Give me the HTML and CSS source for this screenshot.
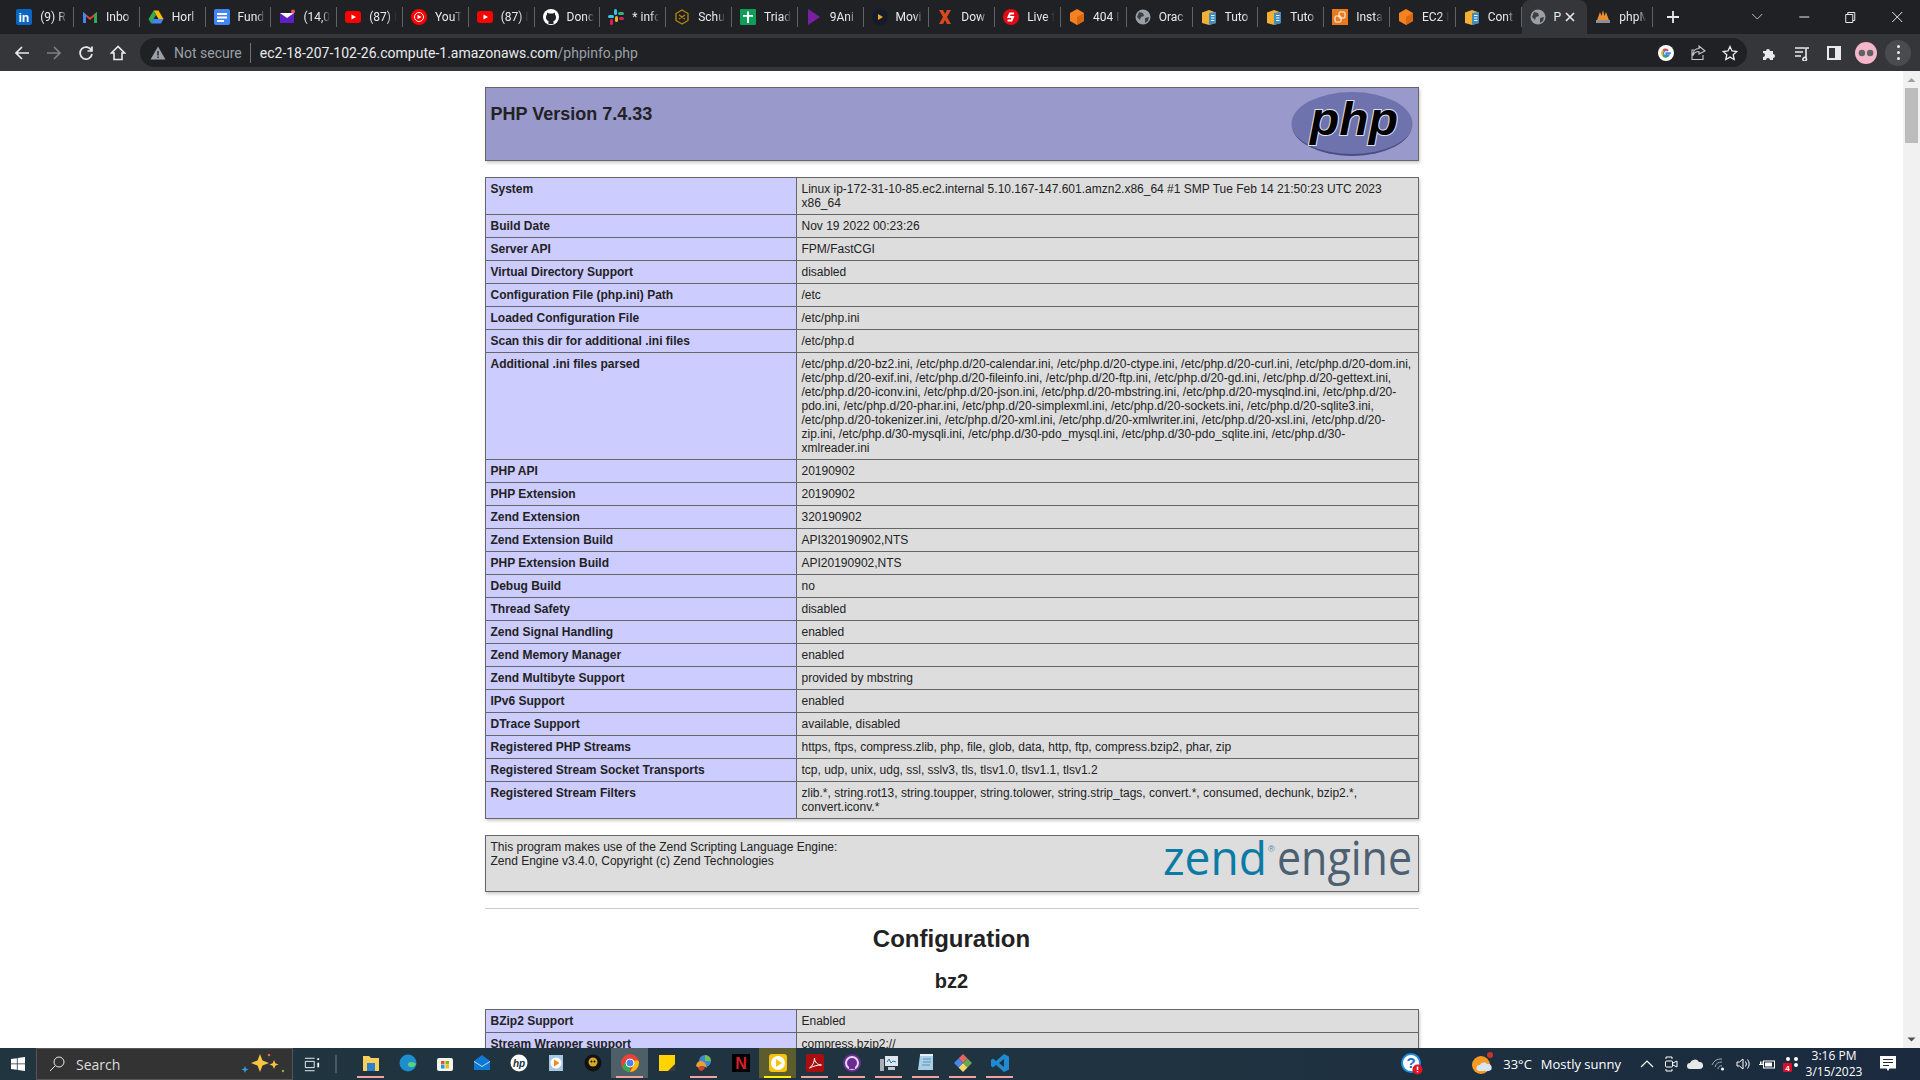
FILE: index.html
```html
<!DOCTYPE html>
<html lang="en">
<head>
    <meta charset="UTF-8">
    <meta name="viewport" content="width=device-width, initial-scale=1.0">
    <title>PHP 7.4.33 - phpinfo()</title>
    <link rel="stylesheet" href="styles.css">
</head>
<body>
    <div class="tabstrip">
        <div class="tab"><svg class="fav" viewBox="0 0 16 16"><rect width="16" height="16" rx="2" fill="#0a66c2"/><text x="2.5" y="13" class="fav-text">in</text></svg><span class="tab-title">(9) R</span></div>
        <div class="tab"><svg class="fav" viewBox="0 0 16 16"><path d="M1 14V3l7 5.5L15 3v11h-3V7.5L8 11 4 7.5V14z" fill="#ea4335"/><path d="M1 14V3l3 2.5V14z" fill="#4285f4"/><path d="M15 14V3l-3 2.5V14z" fill="#34a853"/></svg><span class="tab-title">Inbo</span></div>
        <div class="tab"><svg class="fav" viewBox="0 0 16 16"><path d="M5.5 1.5h5L15.5 10h-5z" fill="#fbbc04"/><path d="M5.5 1.5L.5 10 3 14.5 8 6z" fill="#34a853"/><path d="M3 14.5h10l2.5-4.500h-10z" fill="#4285f4"/></svg><span class="tab-title">Horl</span></div>
        <div class="tab"><svg class="fav" viewBox="0 0 16 16"><rect width="16" height="16" rx="2" fill="#4285f4"/><path d="M3 4h10v2H3zM3 7.5h10v2H3zM3 11h7v2H3z" fill="#fff"/></svg><span class="tab-title">Fund</span></div>
        <div class="tab"><svg class="fav" viewBox="0 0 16 16"><path d="M1 4h14v10H1z" fill="#5f1fc4"/><path d="M1 4h14L8 9z" fill="#fff"/><circle cx="14" cy="2.5" r="2" fill="#f0506e"/></svg><span class="tab-title">(14,0</span></div>
        <div class="tab"><svg class="fav" viewBox="0 0 16 16"><rect y="2" width="16" height="12" rx="3" fill="#f00"/><path d="M6.5 5.5L11 8l-4.500 2.500z" fill="#fff"/></svg><span class="tab-title">(87) I</span></div>
        <div class="tab"><svg class="fav" viewBox="0 0 16 16"><circle cx="8" cy="8" r="8" fill="#f00"/><circle cx="8" cy="8" r="4.500" fill="none" stroke="#fff"/><path d="M6.5 5.8L10.5 8l-4 2.200z" fill="#fff"/></svg><span class="tab-title">YouT</span></div>
        <div class="tab"><svg class="fav" viewBox="0 0 16 16"><rect y="2" width="16" height="12" rx="3" fill="#f00"/><path d="M6.5 5.5L11 8l-4.500 2.500z" fill="#fff"/></svg><span class="tab-title">(87) I</span></div>
        <div class="tab"><svg class="fav" viewBox="0 0 16 16"><circle cx="8" cy="8" r="8" fill="#fff"/><path d="M5.5 15v-3c-2-.5-2.500-2-2.500-4 0-1 .5-2 1-2.500V3.500l2 1h4l2-1v2c.5.500 1 1.500 1 2.500 0 2-.5 3.500-2.500 4v3z" fill="#202124"/></svg><span class="tab-title">Donc</span></div>
        <div class="tab"><svg class="fav" viewBox="0 0 16 16"><rect x="6" y="0" width="3" height="6" rx="1.500" fill="#36c5f0"/><rect x="0" y="6" width="6" height="3" rx="1.500" fill="#36c5f0"/><rect x="10" y="3" width="6" height="3" rx="1.500" fill="#2eb67d"/><rect x="7" y="7" width="3" height="6" rx="1.500" fill="#ecb22e"/><rect x="11" y="8" width="5" height="3" rx="1.500" fill="#e01e5a"/><rect x="2" y="10" width="3" height="6" rx="1.500" fill="#e01e5a"/></svg><span class="tab-title">* info</span></div>
        <div class="tab"><svg class="fav" viewBox="0 0 16 16"><path d="M8 1l6 3.500v7L8 15l-6-3.500v-7zM5 6l6 4M11 6L5 10" fill="none" stroke="#b8860b" stroke-width="1.300"/></svg><span class="tab-title">Schu</span></div>
        <div class="tab"><svg class="fav" viewBox="0 0 16 16"><rect width="16" height="16" rx="1" fill="#0f9d58"/><path d="M7 2.5h2V6h4v1.800H9V14H7V7.800H3V6h4z" fill="#fff"/></svg><span class="tab-title">Triad</span></div>
        <div class="tab"><svg class="fav" viewBox="0 0 16 16"><path d="M2 0l12 8-12 8z" fill="#7b1fa2"/></svg><span class="tab-title">9Ani</span></div>
        <div class="tab"><svg class="fav" viewBox="0 0 16 16"><circle cx="8" cy="8" r="8" fill="#141c2b"/><path d="M6 5l5 3-5 3z" fill="#f5a623"/></svg><span class="tab-title">Movi</span></div>
        <div class="tab"><svg class="fav" viewBox="0 0 16 16"><path d="M2 1h4l2 4 2-4h4l-4 7 4 7h-4l-2-4-2 4H2l4-7z" fill="#d9481c"/></svg><span class="tab-title">Dow</span></div>
        <div class="tab"><svg class="fav" viewBox="0 0 16 16"><circle cx="8" cy="8" r="8" fill="#e50914"/><path d="M11 4.500H7L5.500 8H10l-1.500 3.500H4.500" fill="none" stroke="#fff" stroke-width="2"/></svg><span class="tab-title">Live f</span></div>
        <div class="tab"><svg class="fav" viewBox="0 0 16 16"><path d="M8 0l7 4v8l-7 4-7-4V4z" fill="#f58220"/><path d="M8 8l7-4v8l-7 4z" fill="#d9680f"/></svg><span class="tab-title">404 I</span></div>
        <div class="tab"><svg class="fav" viewBox="0 0 16 16"><circle cx="8" cy="8" r="7.500" fill="#9aa0a6"/><path d="M4 3l4 1 1 3-3 1-1 3-3-3zM10 9l4-1-1 4-3 2z" fill="#3c4043"/></svg><span class="tab-title">Orac</span></div>
        <div class="tab"><svg class="fav" viewBox="0 0 16 16"><path d="M8 1l7 2.500V14l-7 2-7-2V3.500z" fill="#f2b035"/><path d="M8 4l7-1V14l-7 2z" fill="#3f8dbf"/><path d="M10 6.500h3.500M10 9h3.500M10 11.500h3.500" stroke="#fff"/></svg><span class="tab-title">Tuto</span></div>
        <div class="tab"><svg class="fav" viewBox="0 0 16 16"><path d="M8 1l7 2.500V14l-7 2-7-2V3.500z" fill="#f2b035"/><path d="M8 4l7-1V14l-7 2z" fill="#3f8dbf"/><path d="M10 6.500h3.500M10 9h3.500M10 11.500h3.500" stroke="#fff"/></svg><span class="tab-title">Tuto</span></div>
        <div class="tab"><svg class="fav" viewBox="0 0 16 16"><rect width="16" height="16" fill="#e8791d"/><rect x="7" y="3" width="6" height="6" rx="1" fill="none" stroke="#fff"/><rect x="3" y="7" width="6" height="6" rx="1" fill="none" stroke="#fff"/></svg><span class="tab-title">Insta</span></div>
        <div class="tab"><svg class="fav" viewBox="0 0 16 16"><path d="M8 0l7 4v8l-7 4-7-4V4z" fill="#f58220"/><path d="M8 8l7-4v8l-7 4z" fill="#d9680f"/></svg><span class="tab-title">EC2 I</span></div>
        <div class="tab"><svg class="fav" viewBox="0 0 16 16"><path d="M8 1l7 2.500V14l-7 2-7-2V3.500z" fill="#f2b035"/><path d="M8 4l7-1V14l-7 2z" fill="#3f8dbf"/><path d="M10 6.500h3.500M10 9h3.500M10 11.500h3.500" stroke="#fff"/></svg><span class="tab-title">Cont</span></div>
        <div class="tab active"><svg class="fav" viewBox="0 0 16 16"><circle cx="8" cy="8" r="7.500" fill="#9aa0a6"/><path d="M4 3l4 1 1 3-3 1-1 3-3-3zM10 9l4-1-1 4-3 2z" fill="#3c4043"/></svg><span class="tab-title">P</span><svg class="tab-close" viewBox="0 0 10 10"><path d="M1 1l8 8M9 1L1 9" stroke="#e8eaed" stroke-width="1.600"/></svg></div>
        <div class="tab"><svg class="fav" viewBox="0 0 16 16"><path d="M1 14L5 3l1.500 4L8 1l1.500 6L11 3l4 11z" fill="#e8912d"/><rect x="1" y="11" width="14" height="3" fill="#8a8f98"/></svg><span class="tab-title">phpM</span></div>
        <svg class="newtab" viewBox="0 0 12 12"><path d="M6 0v12M0 6h12" stroke="#e8eaed" stroke-width="1.800"/></svg>
        <div class="window-btns">
            <svg class="win-btn" viewBox="0 0 46 34"><path d="M18 14l5 5 5-5" fill="none" stroke="#bdc1c6"/></svg>
            <svg class="win-btn" viewBox="0 0 46 34"><path d="M18 17h10" stroke="#e8eaed"/></svg>
            <svg class="win-btn" viewBox="0 0 46 34"><path d="M18.500 14.500h7v8h-7zM20.500 14.500v-2h7v8h-2" fill="none" stroke="#e8eaed"/></svg>
            <svg class="win-btn" viewBox="0 0 46 34"><path d="M18 12l10 10M28 12L18 22" stroke="#e8eaed"/></svg>
        </div>
    </div>

    <div class="toolbar">
        <svg class="tool" viewBox="0 0 16 16"><path d="M15 8H2M8 2L2 8l6 6" fill="none" stroke="#e8eaed" stroke-width="1.700"/></svg>
        <svg class="tool" viewBox="0 0 16 16"><path d="M1 8h13M8 2l6 6-6 6" fill="none" stroke="#7d8084" stroke-width="1.700"/></svg>
        <svg class="tool" viewBox="0 0 16 16"><path d="M13.500 5.500A6 6 0 1 0 14 9M14 1.500v4.500H9.500" fill="none" stroke="#e8eaed" stroke-width="1.700"/></svg>
        <svg class="tool" viewBox="0 0 16 16"><path d="M8 1.500L1.500 8H4v6.500h8V8h2.500z" fill="none" stroke="#e8eaed" stroke-width="1.600"/></svg>
        <div class="omnibox">
            <svg class="warn" viewBox="0 0 16 16"><path d="M8 1.500L15.500 14.500H.5z" fill="#9aa0a6"/><path d="M7.300 6h1.400v4.500H7.300zM7.300 11.500h1.400V13H7.300z" fill="#202124"/></svg>
            <span class="not-secure">Not secure</span>
            <span class="url"><b>ec2-18-207-102-26.compute-1.amazonaws.com</b>/phpinfo.php</span>
            <div class="omni-icons">
                <svg class="tool" viewBox="0 0 16 16"><circle cx="8" cy="8" r="8" fill="#fff"/><path d="M12.800 8.200H8.200v1.800h2.600A3 3 0 1 1 10 5.800" fill="none" stroke="#4285f4" stroke-width="1.700"/><path d="M5 5.500A3.200 3.200 0 0 1 10 5.800" fill="none" stroke="#ea4335" stroke-width="1.700"/><path d="M5 10.500A3.200 3.200 0 0 1 5 5.500" fill="none" stroke="#fbbc04" stroke-width="1.700"/><path d="M5 10.500a3.200 3.200 0 0 0 5 .3" fill="none" stroke="#34a853" stroke-width="1.700"/></svg>
                <svg class="tool" viewBox="0 0 16 16"><path d="M9 9V6.500C5.500 6.500 4 8 3 10.500 3 6.500 5 3.500 9 3.500V1l6 5zM13 10v4.500H2V5h2.500" fill="none" stroke="#c4c7c5" stroke-width="1.100"/></svg>
                <svg class="tool" viewBox="0 0 16 16"><path d="M8 1.500l2 4.500 4.800.5-3.600 3.200 1 4.800L8 12.100 3.800 14.500l1-4.800L1.200 6.500 6 6z" fill="none" stroke="#e8eaed" stroke-width="1.300"/></svg>
            </div>
        </div>
        <div class="ext-icons">
            <svg class="tool" viewBox="0 0 16 16"><path d="M1 6h3a2 2 0 1 1 4 0h3v3a2 2 0 1 1 0 4v2H8a2 2 0 1 0-4 0H1v-3a2 2 0 1 0 0-4z" fill="#e8eaed"/></svg>
            <svg class="tool" viewBox="0 0 16 16"><path d="M1 3h10M1 7h8M1 11h6" stroke="#e8eaed" stroke-width="1.400"/><path d="M12 13V3h3M12 13a1.800 1.800 0 1 1-.1-.1" fill="none" stroke="#e8eaed" stroke-width="1.600"/></svg>
            <svg class="tool" viewBox="0 0 16 16"><path d="M2 2h12v12H2z" fill="none" stroke="#e8eaed" stroke-width="2"/><path d="M9 2h5v12H9z" fill="#e8eaed"/></svg>
            <svg class="tool avatar" viewBox="0 0 24 24"><circle cx="12" cy="12" r="12" fill="#f4b6c8"/><circle cx="7.500" cy="12" r="3.500" fill="#5f6368"/><circle cx="16.500" cy="12" r="3.500" fill="#5f6368"/></svg>
            <span class="menu-btn"><i></i><i></i><i></i></span>
        </div>
    </div>

    <div class="viewport">
        <div class="page">
            <div class="center">
                <table class="info-table">
                    <tr class="h"><td>
                        <svg class="php-logo" viewBox="0 0 122 64">
                            <ellipse cx="61" cy="32" rx="60.500" ry="32" fill="#6e72ad"/>
                            <path d="M.5 32a60.500 32 0 0 0 121 0 60.500 30 0 0 1-121 0z" fill="#4a4d84"/>
                            <text x="19" y="43" textLength="88" lengthAdjust="spacingAndGlyphs" class="php-word">php</text>
                        </svg>
                        <h1 class="version">PHP Version 7.4.33</h1>
                    </td></tr>
                </table>
                <table class="info-table">
                    <tr><td class="e">System</td><td class="v">Linux ip-172-31-10-85.ec2.internal 5.10.167-147.601.amzn2.x86_64 #1 SMP Tue Feb 14 21:50:23 UTC 2023 x86_64</td></tr>
                    <tr><td class="e">Build Date</td><td class="v">Nov 19 2022 00:23:26</td></tr>
                    <tr><td class="e">Server API</td><td class="v">FPM/FastCGI</td></tr>
                    <tr><td class="e">Virtual Directory Support</td><td class="v">disabled</td></tr>
                    <tr><td class="e">Configuration File (php.ini) Path</td><td class="v">/etc</td></tr>
                    <tr><td class="e">Loaded Configuration File</td><td class="v">/etc/php.ini</td></tr>
                    <tr><td class="e">Scan this dir for additional .ini files</td><td class="v">/etc/php.d</td></tr>
                    <tr><td class="e">Additional .ini files parsed</td><td class="v">/etc/php.d/20-bz2.ini, /etc/php.d/20-calendar.ini, /etc/php.d/20-ctype.ini, /etc/php.d/20-curl.ini, /etc/php.d/20-dom.ini, /etc/php.d/20-exif.ini, /etc/php.d/20-fileinfo.ini, /etc/php.d/20-ftp.ini, /etc/php.d/20-gd.ini, /etc/php.d/20-gettext.ini, /etc/php.d/20-iconv.ini, /etc/php.d/20-json.ini, /etc/php.d/20-mbstring.ini, /etc/php.d/20-mysqlnd.ini, /etc/php.d/20-pdo.ini, /etc/php.d/20-phar.ini, /etc/php.d/20-simplexml.ini, /etc/php.d/20-sockets.ini, /etc/php.d/20-sqlite3.ini, /etc/php.d/20-tokenizer.ini, /etc/php.d/20-xml.ini, /etc/php.d/20-xmlwriter.ini, /etc/php.d/20-xsl.ini, /etc/php.d/20-zip.ini, /etc/php.d/30-mysqli.ini, /etc/php.d/30-pdo_mysql.ini, /etc/php.d/30-pdo_sqlite.ini, /etc/php.d/30-xmlreader.ini</td></tr>
                    <tr><td class="e">PHP API</td><td class="v">20190902</td></tr>
                    <tr><td class="e">PHP Extension</td><td class="v">20190902</td></tr>
                    <tr><td class="e">Zend Extension</td><td class="v">320190902</td></tr>
                    <tr><td class="e">Zend Extension Build</td><td class="v">API320190902,NTS</td></tr>
                    <tr><td class="e">PHP Extension Build</td><td class="v">API20190902,NTS</td></tr>
                    <tr><td class="e">Debug Build</td><td class="v">no</td></tr>
                    <tr><td class="e">Thread Safety</td><td class="v">disabled</td></tr>
                    <tr><td class="e">Zend Signal Handling</td><td class="v">enabled</td></tr>
                    <tr><td class="e">Zend Memory Manager</td><td class="v">enabled</td></tr>
                    <tr><td class="e">Zend Multibyte Support</td><td class="v">provided by mbstring</td></tr>
                    <tr><td class="e">IPv6 Support</td><td class="v">enabled</td></tr>
                    <tr><td class="e">DTrace Support</td><td class="v">available, disabled</td></tr>
                    <tr><td class="e">Registered PHP Streams</td><td class="v">https, ftps, compress.zlib, php, file, glob, data, http, ftp, compress.bzip2, phar, zip</td></tr>
                    <tr><td class="e">Registered Stream Socket Transports</td><td class="v">tcp, udp, unix, udg, ssl, sslv3, tls, tlsv1.0, tlsv1.1, tlsv1.2</td></tr>
                    <tr><td class="e">Registered Stream Filters</td><td class="v">zlib.*, string.rot13, string.toupper, string.tolower, string.strip_tags, convert.*, consumed, dechunk, bzip2.*, convert.iconv.*</td></tr>
                </table>
                <table class="info-table">
                    <tr class="v"><td>
                        <svg class="zend-logo" viewBox="0 0 252 47">
                            <text x="2" y="35" textLength="104" lengthAdjust="spacingAndGlyphs" class="zend-word">zend</text>
                            <text x="107" y="12" class="zend-reg">®</text>
                            <text x="116" y="35" textLength="135" lengthAdjust="spacingAndGlyphs" class="engine-word">engine</text>
                        </svg>
                        This program makes use of the Zend Scripting Language Engine:<br>Zend Engine v3.4.0, Copyright (c) Zend Technologies
                    </td></tr>
                </table>
                <hr class="rule">
                <h1 class="section-title">Configuration</h1>
                <h2 class="module-title">bz2</h2>
                <table class="info-table">
                    <tr><td class="e">BZip2 Support</td><td class="v">Enabled</td></tr>
                    <tr><td class="e">Stream Wrapper support</td><td class="v">compress.bzip2://</td></tr>
                    <tr><td class="e">Stream Filter support</td><td class="v">bzip2.decompress, bzip2.compress</td></tr>
                </table>
            </div>
        </div>
        <div class="scrollbar">
            <svg class="scroll-arrow" viewBox="0 0 17 17"><path d="M4.500 11L8.500 7l4 4z" fill="#a0a0a0"/></svg>
            <div class="scroll-thumb"></div>
            <svg class="scroll-arrow" viewBox="0 0 17 17"><path d="M4.500 6.500L8.500 10.500l4-4z" fill="#505050"/></svg>
        </div>
    </div>

    <div class="taskbar">
        <svg class="start" viewBox="0 0 16 16"><path d="M0 2.300l6.700-1V7.500H0zM7.600 1.200L16 0v7.500H7.600zM0 8.400h6.700v6.300l-6.700-1zM7.600 8.400H16V16l-8.400-1.200z" fill="#fff"/></svg>
        <div class="searchbox">
            <svg class="search-glass" viewBox="0 0 16 16"><circle cx="10" cy="6" r="5" fill="none" stroke="#e8e8e8"/><path d="M6.300 9.700L1 15" stroke="#e8e8e8"/></svg>
            <span>Search</span>
            <svg class="sparkles" viewBox="0 0 44 24"><path d="M19 2l2.500 6.500L28 11l-6.500 2.500L19 20l-2.500-6.500L10 11l6.500-2.500z" fill="#f9c440"/><path d="M33 8l1.300 3.200 3.200 1.300-3.200 1.300L33 17l-1.300-3.200-3.200-1.300 3.200-1.300z" fill="#f9c440"/><path d="M4 14l1 2.500 2.500 1-2.500 1L4 21l-1-2.500-2.500-1 2.500-1z" fill="#2b9fe6"/><circle cx="28" cy="3" r="1.300" fill="#e8663c"/><circle cx="42" cy="19" r="1.200" fill="#7ab648"/></svg>
        </div>
        <svg class="taskview" viewBox="0 0 18 16"><path d="M1.500 4.500h10v7h-10zM1 1h11M1 15h11" fill="none" stroke="#fff"/><path d="M15 1h2v2h-2zM15 6h2v5h-2z" fill="#fff"/></svg>
        <span class="task-sep"></span>
        <div class="apps">
            <div class="app running"><svg class="app-icon" viewBox="0 0 18 18"><path d="M1 2h6l2 2h8v13H1z" fill="#f8cf5c"/><rect x="5" y="9" width="8" height="8" fill="#2a7fd0"/></svg></div>
            <div class="app"><svg class="app-icon" viewBox="0 0 18 18"><circle cx="9" cy="9" r="8.500" fill="#1d8fd1"/><path d="M17 10c-1 3-5 4-7 2.500S9 8 12 8s4 1 5 2z" fill="#5fd36f"/></svg></div>
            <div class="app"><svg class="app-icon" viewBox="0 0 18 18"><rect x="1" y="4" width="16" height="13" rx="2" fill="#f4f4f4"/><rect x="5" y="7" width="3.500" height="3.500" fill="#f25022"/><rect x="9.500" y="7" width="3.500" height="3.500" fill="#7fba00"/><rect x="5" y="11" width="3.500" height="3.500" fill="#00a4ef"/><rect x="9.500" y="11" width="3.500" height="3.500" fill="#ffb900"/></svg></div>
            <div class="app"><svg class="app-icon" viewBox="0 0 18 18"><path d="M1 7l8-6 8 6v9H1z" fill="#0f78d4"/><path d="M1 7l8 5 8-5v1l-8 5-8-5z" fill="#bfe3fb"/></svg></div>
            <div class="app"><svg class="app-icon" viewBox="0 0 18 18"><circle cx="9" cy="9" r="8.500" fill="#fff"/><text x="9" y="13" text-anchor="middle" class="hp-word">hp</text></svg></div>
            <div class="app"><svg class="app-icon" viewBox="0 0 18 18"><rect x="2" y="1" width="14" height="16" fill="#a9c6e4"/><circle cx="9" cy="9" r="5.500" fill="#fff"/><path d="M7 5.500L12.500 9 7 12.500z" fill="#f28b1e"/></svg></div>
            <div class="app"><svg class="app-icon" viewBox="0 0 18 18"><circle cx="9" cy="9" r="8.500" fill="#111"/><circle cx="9" cy="8" r="4.500" fill="#d8a928"/><circle cx="7.500" cy="7.500" r="1" fill="#111"/><circle cx="10.500" cy="7.500" r="1" fill="#111"/></svg></div>
            <div class="app active running"><svg class="app-icon" viewBox="0 0 18 18"><circle cx="9" cy="9" r="9" fill="#ea4335"/><path d="M9 18a9 9 0 0 1-7.800-4.500L5 7l4 6.500z" fill="#34a853"/><path d="M18 9a9 9 0 0 1-9 9l4-7-1-4.500h5.300c.4.800.7 1.600.7 2.500z" fill="#fbbc04"/><circle cx="9" cy="9" r="4" fill="#4285f4" stroke="#fff"/></svg></div>
            <div class="app"><svg class="app-icon" viewBox="0 0 18 18"><rect x="1" y="1" width="16" height="16" fill="#ffd400"/><path d="M10 17l7-7v7z" fill="#3c3c3c"/></svg></div>
            <div class="app running"><svg class="app-icon" viewBox="0 0 18 18"><circle cx="10" cy="7" r="6" fill="#3f86d9"/><path d="M10 1a6 6 0 0 1 6 6h-6z" fill="#6fc14b"/><path d="M1 12c1-6 6-6 9-3l2 5c-3-2-6-3-8 0z" fill="#e8a32c"/><path d="M3 14c2-3 5-2 7 0l-3 3c-2 0-3-1-4-3z" fill="#d2452d"/></svg></div>
            <div class="app"><svg class="app-icon netflix" viewBox="0 0 18 18"><rect width="18" height="18" fill="#000"/><text x="9" y="15" text-anchor="middle" class="netflix-word">N</text></svg></div>
            <div class="app player running"><svg class="app-icon" viewBox="0 0 18 18"><rect width="18" height="18" rx="3" fill="#f4c20d"/><circle cx="9" cy="9" r="7" fill="#fff"/><path d="M7 5l6 4-6 4z" fill="#f4c20d"/></svg></div>
            <div class="app running"><svg class="app-icon" viewBox="0 0 18 18"><rect width="18" height="18" rx="2" fill="#ab0e0e"/><path d="M3.500 14c3-2 5-6 5-10 0 4 3 7 7 7-4 0-8 1-12 3z" fill="none" stroke="#fff"/></svg></div>
            <div class="app running"><svg class="app-icon" viewBox="0 0 18 18"><circle cx="9" cy="9" r="9" fill="#6a2c91"/><circle cx="9" cy="9" r="6" fill="none" stroke="#e8d7f1" stroke-width="2"/><path d="M6 15V10h6v5" fill="#6a2c91"/></svg></div>
            <div class="app running"><svg class="app-icon" viewBox="0 0 18 18"><rect x="5" y="2" width="13" height="10" fill="#dfe6ec"/><path d="M7 8l2-3 2 4 2-2 3 1" fill="none" stroke="#2b79c2"/><rect x="0" y="5" width="4" height="12" fill="#a7aeb5"/><rect x="8" y="13" width="7" height="3" fill="#c4c9ce"/></svg></div>
            <div class="app running"><svg class="app-icon" viewBox="0 0 18 18"><path d="M3 1h13v15H1z" fill="#a9cfe8"/><path d="M6 5h8M6 8h8M5 11h8" stroke="#5c8fb3"/><path d="M3 0h13v2H3z" fill="#e8eef2"/></svg></div>
            <div class="app running"><svg class="app-icon" viewBox="0 0 18 18"><path d="M9 0l4.500 4.500L9 9 4.500 4.500z" fill="#e06666"/><path d="M13.500 4.500L18 9l-4.500 4.500L9 9z" fill="#6aa84f"/><path d="M9 9l4.500 4.500L9 18l-4.500-4.500z" fill="#f1d76b"/><path d="M4.500 4.500L9 9l-4.500 4.500L0 9z" fill="#4a86e8"/></svg></div>
            <div class="app running"><svg class="app-icon" viewBox="0 0 18 18"><path d="M13 0l5 2.500v13L13 18 5 11l-3 2.500L0 12V6l2-1.500L5 7z" fill="#1f8ad2"/><path d="M13 5L8 9l5 4z" fill="#1e3340"/></svg></div>
        </div>
        <div class="tray">
            <svg class="tray-help" viewBox="0 0 22 22"><circle cx="10" cy="10" r="9" fill="#fff" stroke="#1b8fe0" stroke-width="2"/><text x="10" y="15" text-anchor="middle" class="help-word">?</text><circle cx="16.500" cy="16.500" r="5" fill="#e81123"/><path d="M16.500 13.500v3.500M16.500 18v1.300" stroke="#fff" stroke-width="1.500"/></svg>
            <svg class="tray-weather" viewBox="0 0 24 24"><circle cx="9" cy="13" r="9" fill="#f59b23"/><circle cx="18" cy="3" r="3" fill="#c0392b"/><path d="M7 19a3 3 0 0 1 1-6 4 4 0 0 1 7-1 3.500 3.500 0 0 1 2 7z" fill="#d7e6f2"/></svg>
            <span class="temp">33°C</span>
            <span class="weather-text">Mostly sunny</span>
            <svg class="tray-icon tray-caret" viewBox="0 0 16 16"><path d="M2 11l6-6 6 6" fill="none" stroke="#fff" stroke-width="1.200"/></svg>
            <svg class="tray-icon" viewBox="0 0 16 16"><path d="M3 3V1h6v2M3 13v2h6v-2" fill="none" stroke="#fff"/><rect x="2.500" y="5" width="7" height="6" rx="1" fill="none" stroke="#fff"/><path d="M10 7l4-2v6l-4-2" fill="none" stroke="#fff"/></svg>
            <svg class="tray-icon" viewBox="0 0 16 16"><path d="M3 13a3 3 0 0 1 0-6 5 5 0 0 1 9-1 3.500 3.500 0 0 1 1 7z" fill="#e8e8e8"/></svg>
            <svg class="tray-icon" viewBox="0 0 16 16"><path d="M1 9a10 10 0 0 1 10-6M4 11a7 7 0 0 1 7-5M7 13a3 3 0 0 1 4-3" fill="none" stroke="#a3adb5"/><circle cx="11.500" cy="13" r="1.500" fill="#fff"/></svg>
            <svg class="tray-icon" viewBox="0 0 16 16"><path d="M2 6h2.500L8 3v10L4.500 10H2zM10.500 5.500a4 4 0 0 1 0 5M12.500 3.500a7 7 0 0 1 0 9" fill="none" stroke="#fff"/></svg>
            <svg class="tray-icon" viewBox="0 0 16 16"><rect x="4.500" y="5" width="11" height="7" fill="none" stroke="#fff"/><rect x="6" y="6.500" width="7" height="4" fill="#fff"/><path d="M0 8.500h4M1.500 5.500v3M3 5.500v3" stroke="#fff"/></svg>
            <svg class="tray-icon" viewBox="0 0 16 16"><circle cx="5" cy="3" r="2" fill="#fff"/><circle cx="13" cy="3" r="2" fill="#fff"/><circle cx="13" cy="9" r="2" fill="#fff"/><rect x="0" y="7" width="9" height="9" rx="1" fill="#d80f2a"/><text x="4.500" y="14.500" text-anchor="middle" class="badge-word">4</text></svg>
            <div class="clock"><span>3:16 PM</span><span>3/15/2023</span></div>
            <svg class="notif" viewBox="0 0 16 16"><path d="M0 0h16v12.500H9.500L8 15l-1.500-2.500H0z" fill="#fff"/><path d="M3 3.500h10M3 6.500h10M3 9.500h6" stroke="#1c2b40"/></svg>
        </div>
    </div>
</body>
</html>
```

FILE: styles.css
```css
* {
    box-sizing: border-box;
}

html, body {
    margin: 0;
    padding: 0;
    height: 100%;
    overflow: hidden;
}

body {
    display: flex;
    flex-direction: column;
    height: 100vh;
    background-color: #fff;
    font-family: "Liberation Sans", Arial, sans-serif;
}

/* browser tab strip */
.tabstrip {
    display: flex;
    align-items: stretch;
    height: 34px;
    flex: none;
    padding-left: 8.2px;
    background-color: #202124;
    font-family: Roboto, sans-serif;
}

.tab {
    position: relative;
    display: flex;
    align-items: center;
    width: 65.8px;
    padding-left: 8px;
    gap: 8px;
    flex: none;
    color: #e8eaed;
    font-size: 12px;
}

.tab::after {
    content: "";
    position: absolute;
    right: 0;
    top: 7px;
    width: 1px;
    height: 20px;
    background-color: #5f6368;
}

.tab.active {
    background-color: #35363a;
    border-radius: 8px 8px 0 0;
}

.tab.active::after {
    display: none;
}

.fav {
    width: 16px;
    height: 16px;
    flex: none;
}

.fav-text {
    font: bold 12px "Liberation Sans", sans-serif;
    fill: #fff;
}

.tab-title {
    width: 32px;
    flex: none;
    overflow: hidden;
    white-space: nowrap;
    -webkit-mask-image: linear-gradient(to right, #000 58%, transparent 85%);
    mask-image: linear-gradient(to right, #000 58%, transparent 85%);
}

.tab.active .tab-title {
    width: 8px;
    -webkit-mask-image: none;
    mask-image: none;
}

.tab-close {
    width: 10px;
    height: 10px;
    margin-left: -5px;
    flex: none;
}

.newtab {
    width: 12px;
    height: 12px;
    flex: none;
    align-self: center;
    margin-left: 14px;
}

.window-btns {
    display: flex;
    margin-left: auto;
}

.win-btn {
    width: 46.5px;
    height: 34px;
}

/* address bar row */
.toolbar {
    display: flex;
    align-items: center;
    height: 37px;
    flex: none;
    padding: 0 0 0 14px;
    background-color: #35363a;
    gap: 16px;
}

.tool {
    width: 16px;
    height: 16px;
    flex: none;
}

.omnibox {
    display: flex;
    align-items: center;
    width: 1607px;
    height: 29px;
    margin-left: -2px;
    padding: 0 9px 0 10px;
    border-radius: 15px;
    background-color: #202124;
    font-family: Roboto, sans-serif;
    font-size: 14px;
}

.warn {
    width: 16px;
    height: 16px;
    flex: none;
}

.not-secure {
    margin-left: 8px;
    padding-right: 8px;
    border-right: 1px solid #6f7276;
    color: #9aa0a6;
    line-height: 20px;
}

.url {
    margin-left: 9px;
    color: #9aa0a6;
    white-space: nowrap;
}

.url b {
    color: #e8eaed;
    font-weight: 400;
}

.omni-icons {
    display: flex;
    gap: 16px;
    margin-left: auto;
}

.ext-icons {
    display: flex;
    align-items: center;
    gap: 16px;
    margin-left: -1px;
}

.avatar {
    width: 22px;
    height: 22px;
    margin: 0 -3px;
}

.menu-btn {
    display: flex;
    flex-direction: column;
    align-items: center;
    justify-content: center;
    gap: 3px;
    width: 26px;
    height: 26px;
    margin-left: -5px;
    border-radius: 50%;
    background-color: #4a4b4f;
}

.menu-btn i {
    width: 3px;
    height: 3px;
    border-radius: 50%;
    background-color: #e8eaed;
}

/* page area */
.viewport {
    display: flex;
    flex: 1;
    min-height: 0;
}

.page {
    flex: 1;
    min-width: 0;
    overflow: hidden;
    color: #222;
}

.center {
    margin: 8px;
    text-align: center;
}

.info-table {
    width: 934px;
    margin: 16px auto;
    border: 0;
    border-collapse: collapse;
    box-shadow: 1px 2px 3px #ccc;
    text-align: left;
}

.info-table td {
    box-sizing: content-box;
    padding: 4px 5px;
    border: 1px solid #666;
    font-size: 12px;
    vertical-align: baseline;
}

.h {
    background-color: #99c;
    font-weight: bold;
}

.e {
    width: 300px;
    background-color: #ccf;
    font-weight: bold;
}

.v {
    background-color: #ddd;
    max-width: 300px;
    overflow-x: auto;
    word-wrap: break-word;
}

.version {
    margin: 12px 0;
    font-size: 18px;
}

.php-logo {
    float: right;
    width: 122px;
    height: 64px;
}

.php-word {
    font: italic bold 46px "Liberation Sans", sans-serif;
    fill: #000;
    stroke: #dfe0f0;
    stroke-width: 2px;
    paint-order: stroke;
}

.zend-logo {
    float: right;
    width: 252px;
    height: 47px;
}

.zend-word {
    font: 400 48px "Open Sans", sans-serif;
    fill: #0b7ba6;
}

.engine-word {
    font: 400 48px "Open Sans", sans-serif;
    fill: #4c6072;
}

.zend-reg {
    font: 9px "Liberation Sans", sans-serif;
    fill: #4c8aa6;
}

.rule {
    width: 934px;
    height: 1px;
    margin: 8px auto;
    border: 0;
    background-color: #ccc;
}

.section-title {
    margin: 16px 0;
    font-size: 24px;
}

.module-title {
    margin: 17px 0 16px;
    font-size: 20px;
}

/* fake scrollbar, the page itself never scrolls */
.scrollbar {
    display: flex;
    flex-direction: column;
    width: 17px;
    flex: none;
    background-color: #f1f1f1;
}

.scroll-arrow {
    width: 17px;
    height: 17px;
    flex: none;
}

.scroll-thumb {
    width: 13px;
    height: 55px;
    margin-left: 2px;
    margin-bottom: auto;
    background-color: #bcbcbc;
}

/* windows taskbar */
.taskbar {
    display: flex;
    height: 32px;
    align-items: center;
    flex: none;
    background: linear-gradient(to right, #203540, #1f3340 60%, #1b2a3f);
    color: #fff;
    font-family: "Open Sans", sans-serif;
}

.start {
    width: 14px;
    height: 14px;
    flex: none;
    margin: 0 11px;
}

.searchbox {
    display: flex;
    align-items: center;
    width: 257px;
    height: 32px;
    flex: none;
    padding: 0 7px 0 12px;
    background-color: #333;
    border: 1px solid #555;
    color: #ddd;
    font-size: 14px;
}

.search-glass {
    width: 16px;
    height: 16px;
    margin-right: 11px;
}

.sparkles {
    width: 44px;
    height: 24px;
    margin-left: auto;
}

.taskview {
    width: 16px;
    height: 15px;
    flex: none;
    margin-left: 11px;
}

.task-sep {
    width: 2px;
    height: 18px;
    margin: 0 15px;
    flex: none;
    background-color: #4a5a65;
}

.apps {
    display: flex;
    align-self: flex-start;
    height: 30px;
}

.app {
    position: relative;
    display: flex;
    align-items: center;
    justify-content: center;
    width: 37px;
    height: 100%;
    flex: none;
}

.app.running::after {
    content: "";
    position: absolute;
    left: 5px;
    right: 5px;
    bottom: 0;
    height: 2px;
    background-color: #f4a0a0;
}

.app.active {
    background-color: #4d6068;
}

.app.player {
    background-color: #5d5c2e;
}

.app.player::after {
    background-color: #ffef00;
}

.app-icon {
    width: 18px;
    height: 18px;
}

.hp-word {
    font: italic bold 10px "Liberation Sans", sans-serif;
    fill: #1e3340;
}

.netflix-word {
    font: bold 16px "Liberation Sans", sans-serif;
    fill: #d81f26;
}

.tray {
    display: flex;
    align-items: center;
    margin-left: auto;
    font-size: 13px;
}

.tray-help {
    width: 22px;
    height: 22px;
    margin-right: 49px;
}

.help-word {
    font: bold 15px "Liberation Sans", sans-serif;
    fill: #1b6fc2;
}

.badge-word {
    font: bold 8px "Liberation Sans", sans-serif;
    fill: #fff;
}

.tray-weather {
    width: 24px;
    height: 24px;
    margin-right: 7px;
}

.temp {
    margin-right: 9px;
}

.weather-text {
    margin-right: 18px;
}

.tray-icon {
    width: 16px;
    height: 16px;
    margin-right: 8px;
    flex: none;
}

.clock {
    display: flex;
    flex-direction: column;
    align-items: center;
    width: 66px;
    margin-left: -6px;
    font-size: 12px;
    line-height: 16px;
}

.notif {
    width: 16px;
    height: 16px;
    margin: 0 24px 0 13px;
    flex: none;
}
```
